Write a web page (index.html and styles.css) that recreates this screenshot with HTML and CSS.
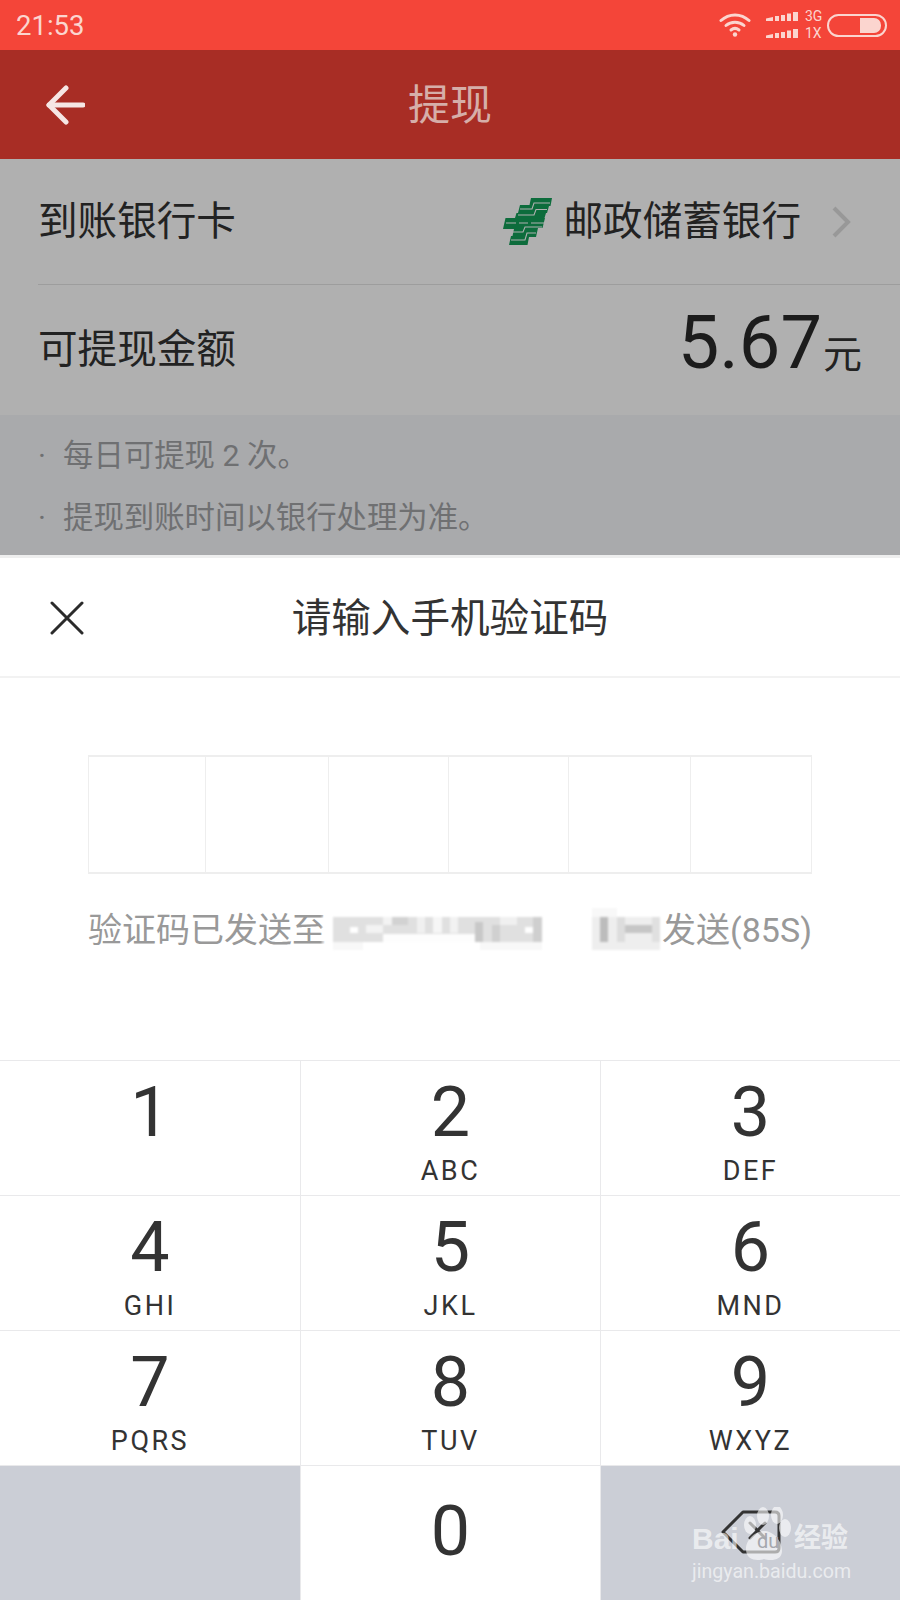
FILE: index.html
```html
<!DOCTYPE html>
<html lang="zh">
<head>
  <meta charset="UTF-8">
  <meta name="viewport" content="width=device-width, initial-scale=1">
  <title>提现</title>
  <link rel="stylesheet" href="styles.css">
</head>
<body>
  <div id="page">
    <!-- 状态栏 -->
    <div class="status-bar">
      <span class="time">21:53</span>
      <div class="status-icons">
        <svg class="wifi" width="32" height="24" viewBox="0 0 32 24" fill="none" stroke="#fbd5cf" stroke-width="3" stroke-linecap="round">
          <path d="M2 7.500C10 0 22 0 30 7.500"/>
          <path d="M7 12.500C12 8 20 8 25 12.500"/>
          <path d="M12 17C14.500 15 17.500 15 20 17"/>
          <circle cx="16" cy="21.500" r="2.200" fill="#fbd5cf" stroke="none"/>
        </svg>
        <svg class="signal" width="32" height="26" viewBox="0 0 32 26" fill="#fbd5cf">
          <path d="M0 6.500L7 5V9H0zM9 4h4v5H9zM15 3h4v6h-4zM21 1.500h4V9h-4zM27 0h5v9h-5z"/>
          <path d="M0 23.500L7 22V26H0zM9 21h4v5H9zM15 20h4v6h-4zM21 18.500h4V26h-4zM27 17h5v9h-5z"/>
        </svg>
        <div class="net-type"><span>3G</span><span>1X</span></div>
        <div class="battery"><div class="battery-fill"></div></div>
      </div>
    </div>

    <!-- 标题栏 -->
    <div class="toolbar">
      <svg class="back" width="40" height="40" viewBox="0 0 40 40" fill="none" stroke="#f6e6e4" stroke-width="5" stroke-linecap="round" stroke-linejoin="round">
        <path d="M38 20H4"/>
        <path d="M21 3L4 20l17 17"/>
      </svg>
      <h1>提现</h1>
    </div>

    <!-- 银行卡 & 金额 -->
    <div class="info">
      <div class="row row-bank">
        <span class="label">到账银行卡</span>
        <div class="bank">
          <svg class="bank-logo" width="50" height="48" viewBox="0 0 50 48">
            <path fill="#0d6c3c" d="M28 0H49L47.500 8H46L44 15H43L41.500 20H42L39.500 30H35L33 39H26L24.500 47H6L8 38H9.500L11 31H0L2.500 20H12L13.500 15H15L17 7H26.500z"/>
            <g fill="none" stroke="#b0b0b0" stroke-width="1.100">
              <path d="M47 5H31L29 11H17"/>
              <path d="M44 11.500H33L31 17H15"/>
              <path d="M3 25H13M16 25H25M28 25H41"/>
              <path d="M39 29H22L20 34H10"/>
              <path d="M33 35H24L22 42H8"/>
            </g>
          </svg>
          <span class="label">邮政储蓄银行</span>
          <svg class="chevron" width="20" height="32" viewBox="0 0 20 32" fill="none" stroke="#989898" stroke-width="4">
            <path d="M3 2l14 14L3 30"/>
          </svg>
        </div>
      </div>
      <div class="divider"></div>
      <div class="row row-amount">
        <span class="label">可提现金额</span>
        <div class="amount"><span class="amount-num">5.67</span><span class="amount-unit">元</span></div>
      </div>
    </div>

    <!-- 提示 -->
    <div class="notes">
      <p><i>·</i>每日可提现 2 次。</p>
      <p><i>·</i>提现到账时间以银行处理为准。</p>
    </div>

    <!-- 验证码面板 -->
    <div class="sheet">
      <div class="sheet-head">
        <svg class="close" width="34" height="34" viewBox="0 0 34 34" stroke="#2b2b2b" stroke-width="3" stroke-linecap="round">
          <path d="M2 2l30 30M32 2L2 32"/>
        </svg>
        <h2>请输入手机验证码</h2>
      </div>

      <div class="code-box">
        <div></div><div></div><div></div><div></div><div></div><div></div>
      </div>

      <div class="code-tip">
        <span>验证码已发送至</span>
        <span>发送(85S)</span>
        <!-- 打码的手机号 -->
        <svg class="mosaic" width="380" height="44" viewBox="295 908 380 44">
          <rect x="322" y="915" width="11" height="35" fill="#fff" opacity="0.7"/>
          <rect x="333" y="917" width="209" height="25" fill="#e0e0e0"/>
          <rect x="333" y="942" width="30" height="8" fill="#f8f8f8"/>
          <rect x="480" y="942" width="62" height="8" fill="#f8f8f8"/>
          <rect x="350" y="927" width="8" height="6" fill="#fff"/>
          <rect x="525" y="927" width="8" height="6" fill="#fff"/>
          <rect x="366" y="925" width="17" height="8" fill="#f3f3f3"/>
          <rect x="383" y="917" width="9" height="8" fill="#f3f3f3"/>
          <rect x="392" y="917" width="16" height="8" fill="#d2d2d2"/>
          <rect x="383" y="934" width="92" height="8" fill="#fdfdfd"/>
          <rect x="417" y="917" width="8" height="16" fill="#f0f0f0"/>
          <rect x="433" y="917" width="9" height="16" fill="#f6f6f6"/>
          <rect x="450" y="917" width="8" height="16" fill="#f2f2f2"/>
          <rect x="475" y="922" width="8" height="20" fill="#c8c8c8"/>
          <rect x="492" y="925" width="8" height="17" fill="#d0d0d0"/>
          <rect x="500" y="917" width="17" height="8" fill="#f0f0f0"/>
          <rect x="533" y="917" width="9" height="25" fill="#cfcfcf"/>
          <rect x="592" y="917" width="68" height="33" fill="#eeeeee"/>
          <rect x="592" y="908" width="25" height="9" fill="#f8f8f8"/>
          <rect x="600" y="917" width="8" height="25" fill="#bcbcbc"/>
          <rect x="617" y="917" width="8" height="25" fill="#dddddd"/>
          <rect x="625" y="925" width="27" height="8" fill="#c6c6c6"/>
          <rect x="652" y="917" width="8" height="25" fill="#e0e0e0"/>
        </svg>
      </div>

      <!-- 数字键盘 -->
      <div class="keypad">
        <div class="key"><span class="num">1</span></div>
        <div class="key"><span class="num">2</span><span class="letters">ABC</span></div>
        <div class="key"><span class="num">3</span><span class="letters">DEF</span></div>
        <div class="key"><span class="num">4</span><span class="letters">GHI</span></div>
        <div class="key"><span class="num">5</span><span class="letters">JKL</span></div>
        <div class="key"><span class="num">6</span><span class="letters">MND</span></div>
        <div class="key"><span class="num">7</span><span class="letters">PQRS</span></div>
        <div class="key"><span class="num">8</span><span class="letters">TUV</span></div>
        <div class="key"><span class="num">9</span><span class="letters">WXYZ</span></div>
        <div class="key key-fn"></div>
        <div class="key key-zero"><span class="num">0</span></div>
        <div class="key key-fn key-del">
          <svg width="60" height="44" viewBox="0 0 60 44" fill="none" stroke="#333" stroke-width="3" stroke-linejoin="round" stroke-linecap="round">
            <path d="M2 22L22 2H54Q58 2 58 6V38Q58 42 54 42H22Z"/>
            <path d="M44 13L29 28M29 13L44 28"/>
          </svg>
        </div>
      </div>
    </div>

    <!-- 水印 -->
    <div class="watermark">
      <div class="wm-top">
        <span class="wm-bai">Bai</span>
        <span class="wm-paw">
          <svg width="50" height="56" viewBox="0 0 50 56" fill="#fff" fill-opacity="0.6">
            <ellipse cx="8" cy="18" rx="6" ry="9"/>
            <ellipse cx="21" cy="9" rx="6" ry="9"/>
            <ellipse cx="35" cy="8" rx="6" ry="9"/>
            <ellipse cx="43" cy="21" rx="6" ry="9"/>
            <path d="M4 42C4 32 14 24 22 24C30 24 40 32 40 44C40 54 28 54 22 52C16 54 4 54 4 42Z"/>
          </svg>
          <span class="wm-du">du</span>
        </span>
        <span class="wm-cn">经验</span>
      </div>
      <div class="wm-url">jingyan.baidu.com</div>
    </div>
  </div>
</body>
</html>
```

FILE: styles.css
```css
* {
  box-sizing: border-box;
}
body {
  margin: 0;
  background: #fff;
  font-family: Roboto, "Noto Sans CJK SC", sans-serif;
}
#page {
  position: relative;
  width: 900px;
  height: 1600px;
  display: flex;
  flex-direction: column;
  overflow: hidden;
}
/* 状态栏 */
.status-bar {
  height: 50px;
  background: #f44539;
  display: flex;
  align-items: center;
  justify-content: space-between;
  padding: 0 13px 0 16px;
  color: #fbd5cf;
}
.time {
  font-size: 27.500px;
}
.status-icons {
  display: flex;
  align-items: center;
}
.wifi {
  margin-right: 15px;
}
.signal {
  margin-right: 7px;
}
.net-type {
  display: flex;
  flex-direction: column;
  font-size: 14px;
  line-height: 17px;
  width: 22px;
}
.battery {
  width: 60px;
  height: 23px;
  border: 2px solid #fbd5cf;
  border-radius: 12px;
  display: flex;
  justify-content: flex-end;
  padding: 2px 4px 2px 0;
}
.battery-fill {
  width: 21px;
  background: #fbd5cf;
  border-radius: 0 7px 7px 0;
}
/* 标题栏 */
.toolbar {
  height: 109px;
  background: #a82d25;
  position: relative;
  display: flex;
  align-items: center;
  justify-content: center;
}
.back {
  position: absolute;
  left: 45px;
  top: 35px;
}
.toolbar h1 {
  margin: 0 0 6px;
  font-size: 42px;
  font-weight: 400;
  color: #d6aea9;
}
/* 银行卡 & 金额 */
.info {
  background: #b0b0b0;
  color: #222;
  font-size: 39.600px;
}
.row {
  display: flex;
  align-items: center;
  justify-content: space-between;
  padding: 0 38px;
}
.row-bank {
  height: 125px;
  padding-right: 49px;
}
.row-amount {
  height: 130px;
}
.label {
  margin-bottom: 8px;
}
.row-amount .label {
  margin-bottom: 10px;
}
.divider {
  height: 1px;
  margin-left: 38px;
  background: #9d9d9d;
}
.bank {
  display: flex;
  align-items: center;
}
.bank-logo {
  margin-right: 11px;
}
.chevron {
  margin-left: 30px;
}
.amount {
  display: flex;
  align-items: baseline;
  margin-top: -16px;
}
.amount-num {
  font-size: 74px;
  color: #1c1c1c;
}
.amount-unit {
  font-size: 39px;
  margin-left: 1px;
}
/* 提示 */
.notes {
  height: 140px;
  background: #a9aaac;
  color: #6f7072;
  font-size: 30.400px;
  padding: 19px 0 0 38px;
}
.notes p {
  margin: 0 0 19px;
  line-height: 43px;
  display: flex;
}
.notes i {
  width: 25px;
  font-style: normal;
}
/* 验证码面板 */
.sheet {
  flex: 1;
  display: flex;
  flex-direction: column;
  background: #fff;
  border-top: 3px solid #eeeeee;
}
.sheet-head {
  height: 120px;
  border-bottom: 2px solid #f2f2f2;
  position: relative;
  display: flex;
  align-items: center;
  justify-content: center;
}
.sheet-head h2 {
  margin: 0 0 6px;
  font-size: 39.600px;
  font-weight: 400;
  color: #333;
}
.close {
  position: absolute;
  left: 50px;
  top: 43px;
}
.code-box {
  margin: 77px 88px 0;
  height: 119px;
  display: grid;
  grid-template-columns: 117px 123px 120px 120px 122px 121px;
  border-top: 2px solid #eeeeee;
  border-bottom: 2px solid #eeeeee;
  border-left: 1px solid #eeeeee;
}
.code-box div {
  border-right: 1px solid #eeeeee;
}
.code-tip {
  position: relative;
  margin: 36px 88px 0;
  display: flex;
  justify-content: space-between;
  font-size: 34px;
  line-height: 40px;
  color: #999;
}
.mosaic {
  position: absolute;
  left: 207px;
  top: -2px;
  filter: blur(1px);
}
/* 数字键盘 */
.keypad {
  margin-top: auto;
  display: grid;
  grid-template-columns: 300px 299px 299px;
  grid-auto-rows: 134px;
  gap: 1px;
  padding-top: 1px;
  background: #e9e9eb;
  color: #333;
}
.key {
  background: #fff;
  display: flex;
  flex-direction: column;
  align-items: center;
  padding-top: 16px;
}
.num {
  font-size: 70px;
  line-height: 70px;
}
.letters {
  font-size: 27px;
  line-height: 28px;
  letter-spacing: 2.500px;
  margin-top: 10px;
}
.key-fn {
  background: #cbced6;
}
.key-zero {
  padding-top: 30px;
}
.key-del {
  padding-top: 44px;
}
/* 水印 */
.watermark {
  position: absolute;
  left: 692px;
  top: 1510px;
  color: rgba(255, 255, 255, 0.62);
}
.wm-top {
  display: flex;
  align-items: flex-end;
  height: 46px;
}
.wm-bai {
  font-family: "Liberation Sans", sans-serif;
  font-size: 30px;
  line-height: 34px;
  font-weight: 700;
  width: 50px;
}
.wm-paw {
  position: relative;
  width: 52px;
  height: 46px;
}
.wm-paw svg {
  position: absolute;
  left: 0;
  top: -3px;
}
.wm-du {
  position: absolute;
  left: 15px;
  top: 20px;
  font-size: 20px;
  line-height: 22px;
  color: #a5a7ad;
}
.wm-cn {
  font-size: 27px;
  line-height: 36px;
  font-weight: 700;
}
.wm-url {
  font-size: 19.600px;
  line-height: 24px;
  margin-top: 4px;
  white-space: nowrap;
}
```
